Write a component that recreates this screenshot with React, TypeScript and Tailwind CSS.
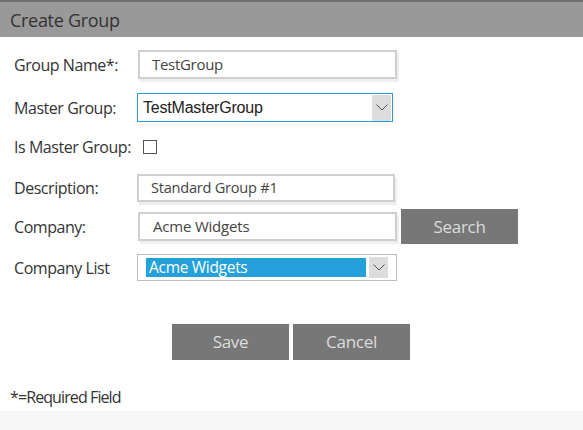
import React from "react";

const sans = { fontFamily: '"Open Sans", "Noto Sans", sans-serif' };

function Chevron() {
  return (
    <svg width="12" height="7" viewBox="0 0 12 7" fill="none">
      <path d="M0.5 0.5 L6 6 L11.5 0.5" stroke="#555" strokeWidth="1" />
    </svg>
  );
}

const label = "text-[16px] tracking-[-0.45px] text-[#333]";

export default function App() {
  return (
    <div className="w-[583px] h-[430px] bg-white flex flex-col text-[#333] overflow-hidden" style={sans}>
      <div className="h-[37px] bg-[#999999] border-t-2 border-[#6e6e6e] flex items-center pl-[10px]">
        <span className="text-[18px] text-[#333] leading-none tracking-[-0.3px]">Create Group</span>
      </div>

      <div className="flex flex-col pl-[14px]">
        {/* Group Name */}
        <div className="flex items-center mt-[13px] h-[29px]">
          <span className={`w-[124px] ${label}`}>Group Name*:</span>
          <div className="w-[259px] h-[29px] border-2 border-[#cfcfcf] shadow-[2px_3px_0_#efefef] flex items-center pl-[12px] text-[15px] text-[#444] tracking-[-0.3px]">
            TestGroup
          </div>
        </div>

        {/* Master Group */}
        <div className="flex items-center mt-[14px] h-[29px]">
          <span className={`w-[123px] ${label}`}>Master Group:</span>
          <div className="w-[256px] h-[29px] border border-[#2a9ad8] flex items-center">
            <span className="flex-1 pl-[5px] text-[16px] text-[#222] tracking-[-0.2px]" style={{ fontFamily: '"Liberation Sans", Arial, sans-serif' }}>
              TestMasterGroup
            </span>
            <div className="w-[19px] h-[26px] bg-[#dddddd] flex items-center justify-center mr-[1px]">
              <Chevron />
            </div>
          </div>
        </div>

        {/* Is Master Group */}
        <div className="flex items-center mt-[15px] h-[20px]">
          <span className={`w-[129px] ${label}`}>Is Master Group:</span>
          <div className="w-[14px] h-[14px] border border-[#555] bg-white" />
        </div>

        {/* Description */}
        <div className="flex items-center mt-[17px] h-[28px]">
          <span className={`w-[123px] ${label}`}>Description:</span>
          <div className="w-[258px] h-[28px] border-2 border-[#cfcfcf] shadow-[2px_3px_0_#efefef] flex items-center pl-[12px] text-[14.6px] text-[#444] tracking-[-0.25px]">
            Standard Group #1
          </div>
        </div>

        {/* Company */}
        <div className="flex items-center mt-[7px] h-[35px]">
          <span className={`w-[124px] ${label}`}>Company:</span>
          <div className="w-[259px] h-[29px] border-2 border-[#cfcfcf] shadow-[2px_3px_0_#efefef] flex items-center pl-[13px] text-[15px] text-[#444] tracking-[-0.2px]">
            Acme Widgets
          </div>
          <div className="ml-[4px] w-[117px] h-[35px] bg-[#777777] text-[#dcdcdc] text-[17px] flex items-center justify-center tracking-[-0.3px]">
            Search
          </div>
        </div>

        {/* Company List */}
        <div className="flex items-center mt-[10px] h-[27px]">
          <span className={`w-[123px] ${label}`}>Company List</span>
          <div className="w-[260px] h-[27px] border border-[#bdbdbd] flex items-center pl-[8px]">
            <div className="w-[220px] h-[19px] bg-[#24a0db] text-white text-[15.5px] flex items-center pl-[3px] tracking-[-0.3px]">
              Acme Widgets
            </div>
            <div className="ml-[3px] w-[19px] h-[21px] bg-[#dddddd] flex items-center justify-center">
              <Chevron />
            </div>
          </div>
        </div>
      </div>

      {/* Buttons */}
      <div className="flex mt-[43px] pl-[172px] gap-[4px]">
        <div className="w-[117px] h-[36px] bg-[#777777] text-[#dcdcdc] text-[17px] flex items-center justify-center tracking-[-0.3px]">
          Save
        </div>
        <div className="w-[117px] h-[36px] bg-[#777777] text-[#dcdcdc] text-[17px] flex items-center justify-center tracking-[-0.3px]">
          Cancel
        </div>
      </div>

      <div className="mt-[27px] pl-[10px] h-[20px] flex items-center text-[16px] text-[#333] tracking-[-0.9px]">
        *=Required Field
      </div>

      <div className="mt-[4px] flex-1 bg-[#f7f7f7]" />
    </div>
  );
}
